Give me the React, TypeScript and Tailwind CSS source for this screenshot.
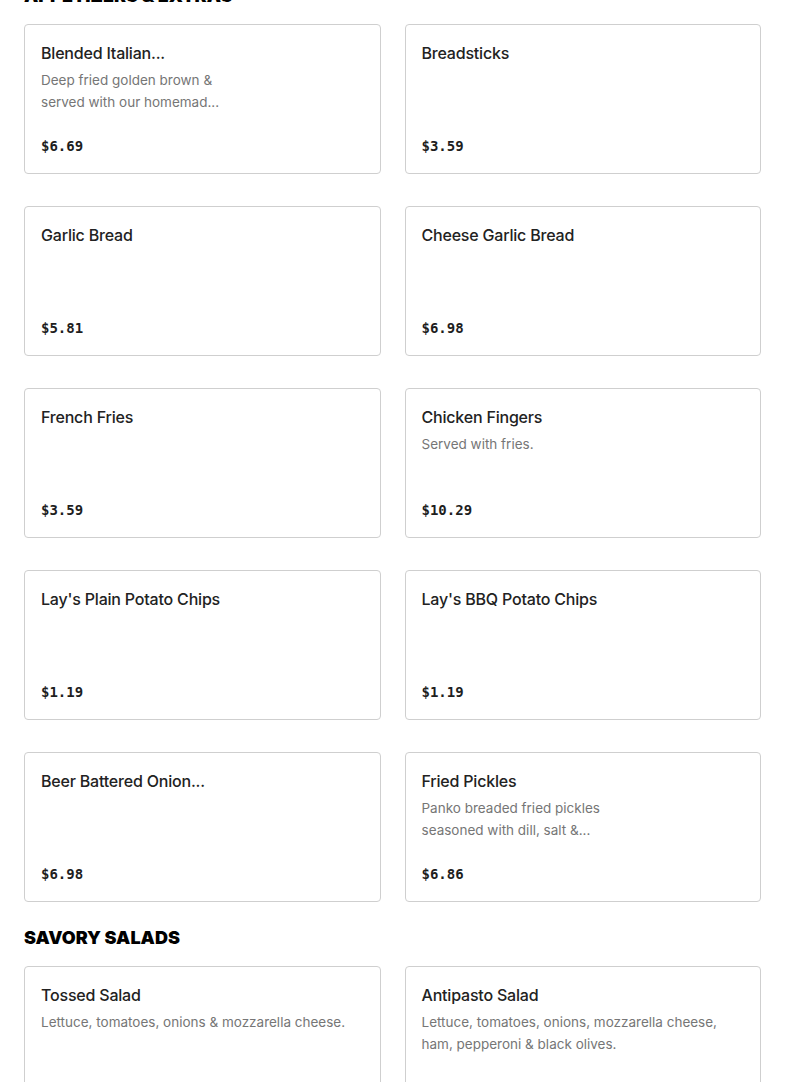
import React from "react";

type Item = { name: string; desc?: string[]; price: string };

const appetizers: Item[] = [
  { name: "Blended Italian...", desc: ["Deep fried golden brown &", "served with our homemad..."], price: "$6.69" },
  { name: "Breadsticks", price: "$3.59" },
  { name: "Garlic Bread", price: "$5.81" },
  { name: "Cheese Garlic Bread", price: "$6.98" },
  { name: "French Fries", price: "$3.59" },
  { name: "Chicken Fingers", desc: ["Served with fries."], price: "$10.29" },
  { name: "Lay's Plain Potato Chips", price: "$1.19" },
  { name: "Lay's BBQ Potato Chips", price: "$1.19" },
  { name: "Beer Battered Onion...", price: "$6.98" },
  { name: "Fried Pickles", desc: ["Panko breaded fried pickles", "seasoned with dill, salt &..."], price: "$6.86" },
];

const salads: Item[] = [
  { name: "Tossed Salad", desc: ["Lettuce, tomatoes, onions & mozzarella cheese."], price: "$4.79" },
  { name: "Antipasto Salad", desc: ["Lettuce, tomatoes, onions, mozzarella cheese,", "ham, pepperoni & black olives."], price: "$9.49" },
];

function Card({ item }: { item: Item }) {
  return (
    <div className="flex h-[150px] flex-col justify-between rounded-[4px] border border-[#cfcfcf] bg-white p-4">
      <div>
        <div className="text-[16px] font-medium leading-6 tracking-[-0.2px] text-[#222222]">{item.name}</div>
        {item.desc && (
          <div className="mt-1 text-[13.5px] leading-[22px] text-[#767676]">
            {item.desc.map((l, i) => (
              <div key={i} className="whitespace-nowrap">{l}</div>
            ))}
          </div>
        )}
      </div>
      <div
        className="text-[14px] font-bold leading-[22px] text-[#1e1e1e]"
        style={{ fontFamily: '"DejaVu Sans Mono", "Liberation Mono", monospace' }}
      >
        {item.price}
      </div>
    </div>
  );
}

function Section({ title, items }: { title: string; items: Item[] }) {
  return (
    <section>
      <h2 className="mb-4 text-[18px] font-black uppercase leading-6 text-black">{title}</h2>
      <div className="grid grid-cols-2 gap-x-6 gap-y-8">
        {items.map((it) => (
          <Card key={it.name} item={it} />
        ))}
      </div>
    </section>
  );
}

export default function App() {
  return (
    <div className="h-[1082px] w-full overflow-hidden bg-white" style={{ fontFamily: "Inter, 'Noto Sans', sans-serif" }}>
      <div className="-mt-[16px] flex flex-col gap-6 px-6">
        <Section title="Appetizers & Extras" items={appetizers} />
        <Section title="Savory Salads" items={salads} />
      </div>
    </div>
  );
}
